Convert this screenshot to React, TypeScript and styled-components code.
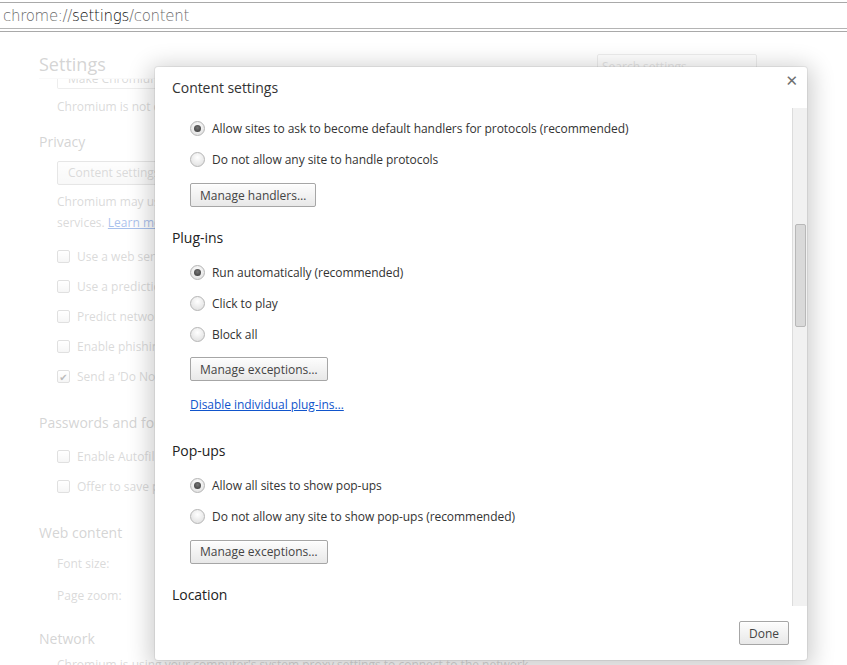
import styled, { createGlobalStyle } from "styled-components";

const Global = createGlobalStyle`
  html, body {
    margin: 0;
    padding: 0;
    background: #fff;
    overflow: hidden;
  }
  body {
    font-family: "Open Sans", "Noto Sans", "DejaVu Sans", sans-serif;
    font-size: 12px;
    color: #333;
  }
`;

const Root = styled.div`
  position: relative;
  width: 847px;
  height: 665px;
  overflow: hidden;
  background: #fff;
`;

const AddressBar = styled.div`
  margin-top: 2px;
  height: 25px;
  border-top: 1px solid #a9a9a9;
  border-bottom: 1px solid #b4b4b4;
  display: flex;
  align-items: center;
  padding-left: 3px;
  font-family: "DejaVu Sans", sans-serif;
  font-size: 15px;
  font-weight: 300;
  letter-spacing: -0.3px;
  color: #6a6a6a;
`;

const Host = styled.span`
  color: #111;
`;

const BarRule = styled.div`
  height: 1px;
  margin-top: 2px;
  background: #a9a9a9;
`;

/* ---------- background settings page ---------- */

const Page = styled.div`
  padding-left: 39px;
  color: #999;
`;

const PageHeader = styled.div`
  display: flex;
  justify-content: space-between;
  align-items: flex-start;
  height: 46px;
  border-bottom: 1px solid #eee;
  margin-right: 90px;
`;

const PageTitle = styled.h1`
  margin: 20px 0 0;
  font-size: 18px;
  font-weight: 400;
  color: #8a8a8a;
`;

const SearchBox = styled.div`
  margin-top: 22px;
  width: 160px;
  height: 22px;
  border: 1px solid #cfcfcf;
  border-radius: 2px;
  color: #bbb;
  font-size: 12px;
  padding: 3px 4px;
  box-sizing: border-box;
`;

const PeekButton = styled.div`
  margin-left: 18px;
  width: 260px;
  height: 10px;
  overflow: hidden;
  border: 1px solid #ccc;
  border-top: none;
  border-radius: 0 0 2px 2px;
  display: flex;
  align-items: flex-end;
  padding: 0 0 3px 10px;
  box-sizing: border-box;
  line-height: 12px;
`;

const Note = styled.div<{ $top?: number }>`
  margin: ${(p) => p.$top ?? 0}px 0 0 18px;
  height: 21px;
  line-height: 21px;
  white-space: nowrap;
`;

const SectionTitle = styled.h2<{ $top: number }>`
  margin: ${(p) => p.$top}px 0 0;
  font-size: 14px;
  font-weight: 400;
  line-height: 20px;
  color: #8a8a8a;
`;

const GhostButton = styled.div`
  margin: 9px 0 0 18px;
  width: 200px;
  height: 24px;
  box-sizing: border-box;
  border: 1px solid #bbb;
  border-radius: 2px;
  background: linear-gradient(#fafafa, #ececec);
  line-height: 22px;
  padding-left: 10px;
`;

const LearnMore = styled.span`
  color: #15c;
  text-decoration: underline;
`;

const CheckRow = styled.div<{ $top?: number }>`
  margin: ${(p) => p.$top ?? 0}px 0 0 18px;
  height: 30px;
  display: flex;
  align-items: center;
  gap: 7px;
  white-space: nowrap;
`;

const Box = styled.span`
  width: 13px;
  height: 13px;
  box-sizing: border-box;
  border: 1px solid #aaa;
  border-radius: 2px;
  background: linear-gradient(#fff, #e6e6e6);
  display: flex;
  align-items: center;
  justify-content: center;
  color: #444;
  font-size: 10px;
`;

const Overlay = styled.div`
  position: absolute;
  left: 0;
  right: 0;
  top: 34px;
  bottom: 0;
  background: rgba(255, 255, 255, 0.64);
`;

/* ---------- dialog ---------- */

const Dialog = styled.div`
  position: absolute;
  left: 155px;
  top: 67px;
  width: 652px;
  height: 593px;
  background: #fff;
  border-radius: 3px;
  box-shadow: 0 4px 23px 5px rgba(0, 0, 0, 0.2), 0 0 0 1px rgba(0, 0, 0, 0.06);
  display: flex;
  flex-direction: column;
  color: #333;
  letter-spacing: -0.05px;
`;

const DialogHeader = styled.div`
  height: 41px;
  display: flex;
  justify-content: space-between;
  align-items: flex-start;
  padding: 0 9px 0 17px;
`;

const DialogTitle = styled.h1`
  margin: 11px 0 0;
  font-size: 14px;
  font-weight: 400;
  line-height: 20px;
  color: #333;
`;

const Close = styled.span`
  margin-top: 5px;
  font-family: "DejaVu Sans", sans-serif;
  font-size: 15px;
  font-weight: 700;
  color: #707070;
`;

const Body = styled.div`
  flex: 1;
  display: flex;
  overflow: hidden;
`;

const Scroll = styled.div`
  flex: 1;
  overflow: hidden;
  padding: 5px 0 0 17px;
`;

const Track = styled.div`
  width: 14px;
  background: #f1f1f1;
  border-left: 1px solid #dcdcdc;
  display: flex;
  justify-content: center;
`;

const Thumb = styled.div`
  margin-top: 116px;
  width: 9px;
  height: 101px;
  background: #d9d9d9;
  border: 1px solid #b8b8b8;
  border-radius: 2px;
`;

const Heading = styled.h2<{ $top: number }>`
  margin: ${(p) => p.$top}px 0 0;
  font-size: 14px;
  font-weight: 400;
  line-height: 20px;
  color: #222;
`;

const RadioGroup = styled.div<{ $top: number }>`
  margin: ${(p) => p.$top}px 0 0 18px;
  display: flex;
  flex-direction: column;
`;

const RadioRow = styled.label`
  height: 31px;
  display: flex;
  align-items: center;
  gap: 7px;
  color: #333;
  white-space: nowrap;
`;

const Radio = styled.span<{ $on?: boolean }>`
  width: 15px;
  height: 15px;
  box-sizing: border-box;
  border-radius: 50%;
  border: 1px solid #b5b5b5;
  background: radial-gradient(circle at 50% 35%, #ffffff, #e4e4e4 75%);
  display: flex;
  align-items: center;
  justify-content: center;
  flex-shrink: 0;

  &::after {
    content: "";
    display: ${(p) => (p.$on ? "block" : "none")};
    width: 7px;
    height: 7px;
    border-radius: 50%;
    background: radial-gradient(circle at 50% 40%, #777, #333);
  }
`;

const Button = styled.button<{ $top: number; $left?: number }>`
  margin: ${(p) => p.$top}px 0 0 ${(p) => p.$left ?? 18}px;
  height: 24px;
  padding: 0 9px;
  font-family: inherit;
  font-size: 12px;
  color: #444;
  border: 1px solid #a6a6a6;
  border-radius: 2px;
  background: linear-gradient(#fdfdfd, #e8e8e8);
  box-shadow: inset 0 1px 0 #fff;
  display: block;
`;

const Link = styled.a`
  display: block;
  margin: 16px 0 0 18px;
  line-height: 16px;
  color: #15c;
  text-decoration: underline;
`;

const Footer = styled.div`
  height: 54px;
  display: flex;
  justify-content: flex-end;
  align-items: flex-start;
  padding-right: 18px;
`;

type Opt = { label: string; on?: boolean };

function Radios({ top, options }: { top: number; options: Opt[] }) {
  return (
    <RadioGroup $top={top}>
      {options.map((o) => (
        <RadioRow key={o.label}>
          <Radio $on={o.on} />
          {o.label}
        </RadioRow>
      ))}
    </RadioGroup>
  );
}

export default function App() {
  return (
    <Root>
      <Global />
      <AddressBar>
        chrome://<Host>settings</Host>/content
      </AddressBar>
      <BarRule />

      <Page>
        <PageHeader>
          <PageTitle>Settings</PageTitle>
          <SearchBox>Search settings</SearchBox>
        </PageHeader>
        <PeekButton>Make Chromium the default browser</PeekButton>
        <Note $top={6.5}>Chromium is not currently your default browser.</Note>
        <SectionTitle $top={15}>Privacy</SectionTitle>
        <GhostButton>Content settings…</GhostButton>
        <Note $top={6.5}>
          Chromium may use web services to improve your browsing experience.
        </Note>
        <Note>
          services. <LearnMore>Learn more</LearnMore>
        </Note>
        <CheckRow $top={8.5}>
          <Box />
          Use a web service to help resolve navigation errors
        </CheckRow>
        <CheckRow>
          <Box />
          Use a prediction service to help complete searches
        </CheckRow>
        <CheckRow>
          <Box />
          Predict network actions to improve page load performance
        </CheckRow>
        <CheckRow>
          <Box />
          Enable phishing and malware protection
        </CheckRow>
        <CheckRow>
          <Box>✔</Box>
          Send a ‘Do Not Track’ request with your browsing traffic
        </CheckRow>
        <SectionTitle $top={21}>Passwords and forms</SectionTitle>
        <CheckRow $top={9}>
          <Box />
          Enable Autofill to fill out web forms in a single click.
        </CheckRow>
        <CheckRow>
          <Box />
          Offer to save passwords I enter on the web.
        </CheckRow>
        <SectionTitle $top={21}>Web content</SectionTitle>
        <Note $top={10.5}>Font size:</Note>
        <Note $top={11}>Page zoom:</Note>
        <SectionTitle $top={22.5}>Network</SectionTitle>
        <Note $top={5}>
          Chromium is using your computer's system proxy settings to connect to the network.
        </Note>
      </Page>

      <Overlay />

      <Dialog>
        <DialogHeader>
          <DialogTitle>Content settings</DialogTitle>
          <Close>✕</Close>
        </DialogHeader>
        <Body>
          <Scroll>
            <Radios
              top={0}
              options={[
                {
                  label:
                    "Allow sites to ask to become default handlers for protocols (recommended)",
                  on: true,
                },
                { label: "Do not allow any site to handle protocols" },
              ]}
            />
            <Button $top={8}>Manage handlers…</Button>
            <Heading $top={21}>Plug-ins</Heading>
            <Radios
              top={8.5}
              options={[
                { label: "Run automatically (recommended)", on: true },
                { label: "Click to play" },
                { label: "Block all" },
              ]}
            />
            <Button $top={7.5}>Manage exceptions…</Button>
            <Link>Disable individual plug-ins…</Link>
            <Heading $top={28}>Pop-ups</Heading>
            <Radios
              top={8.5}
              options={[
                { label: "Allow all sites to show pop-ups", on: true },
                {
                  label:
                    "Do not allow any site to show pop-ups (recommended)",
                },
              ]}
            />
            <Button $top={8}>Manage exceptions…</Button>
            <Heading $top={21}>Location</Heading>
          </Scroll>
          <Track>
            <Thumb />
          </Track>
        </Body>
        <Footer>
          <Button $top={15} $left={0}>
            Done
          </Button>
        </Footer>
      </Dialog>
    </Root>
  );
}
